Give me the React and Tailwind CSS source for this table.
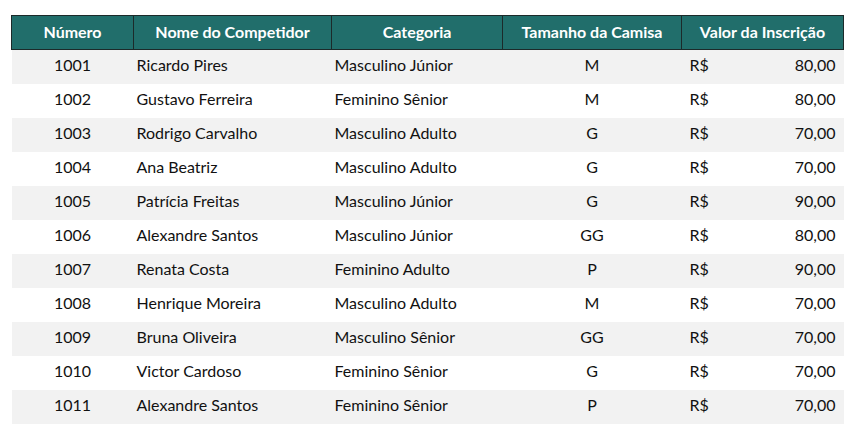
import React from "react";

const rows = [
  ["1001", "Ricardo Pires", "Masculino Júnior", "M", "80,00"],
  ["1002", "Gustavo Ferreira", "Feminino Sênior", "M", "80,00"],
  ["1003", "Rodrigo Carvalho", "Masculino Adulto", "G", "70,00"],
  ["1004", "Ana Beatriz", "Masculino Adulto", "G", "70,00"],
  ["1005", "Patrícia Freitas", "Masculino Júnior", "G", "90,00"],
  ["1006", "Alexandre Santos", "Masculino Júnior", "GG", "80,00"],
  ["1007", "Renata Costa", "Feminino Adulto", "P", "90,00"],
  ["1008", "Henrique Moreira", "Masculino Adulto", "M", "70,00"],
  ["1009", "Bruna Oliveira", "Masculino Sênior", "GG", "70,00"],
  ["1010", "Victor Cardoso", "Feminino Sênior", "G", "70,00"],
  ["1011", "Alexandre Santos", "Feminino Sênior", "P", "70,00"],
];

export default function App() {
  return (
    <div className="w-[853px] h-[431px] bg-white pt-[15px] pl-[11px] text-[16px] text-[#111111] font-['Lato','Open_Sans',sans-serif]">
      <table className="table-fixed border-collapse w-[832px]">
        <colgroup>
          <col className="w-[122px]" />
          <col className="w-[198px]" />
          <col className="w-[171px]" />
          <col className="w-[179px]" />
          <col className="w-[162px]" />
        </colgroup>
        <thead>
          <tr className="h-[34px] bg-[#216e6b] text-white font-bold">
            <th className="border border-[#1c2a2a] text-center font-bold p-0 pb-[2px]">Número</th>
            <th className="border border-[#1c2a2a] text-center font-bold p-0 pb-[2px]">Nome do Competidor</th>
            <th className="border border-[#1c2a2a] text-center font-bold p-0 pb-[2px]">Categoria</th>
            <th className="border border-[#1c2a2a] text-center font-bold p-0 pb-[2px]">Tamanho da Camisa</th>
            <th className="border border-[#1c2a2a] text-center font-bold p-0 pb-[2px]">Valor da Inscrição</th>
          </tr>
        </thead>
        <tbody>
          {rows.map((r, i) => (
            <tr key={r[0]} className={i % 2 === 0 ? "h-[34px] bg-[#f2f2f2]" : "h-[34px] bg-white"}>
              <td className="text-center p-0 pb-[3px]">{r[0]}</td>
              <td className="p-0 pl-[3px] pb-[3px]">{r[1]}</td>
              <td className="p-0 pl-[3px] pb-[3px]">{r[2]}</td>
              <td className="text-center p-0 pb-[3px]">{r[3]}</td>
              <td className="p-0 pb-[3px]">
                <div className="flex justify-between pl-[8px] pr-[8px]">
                  <span>R$</span>
                  <span>{r[4]}</span>
                </div>
              </td>
            </tr>
          ))}
        </tbody>
      </table>
    </div>
  );
}
